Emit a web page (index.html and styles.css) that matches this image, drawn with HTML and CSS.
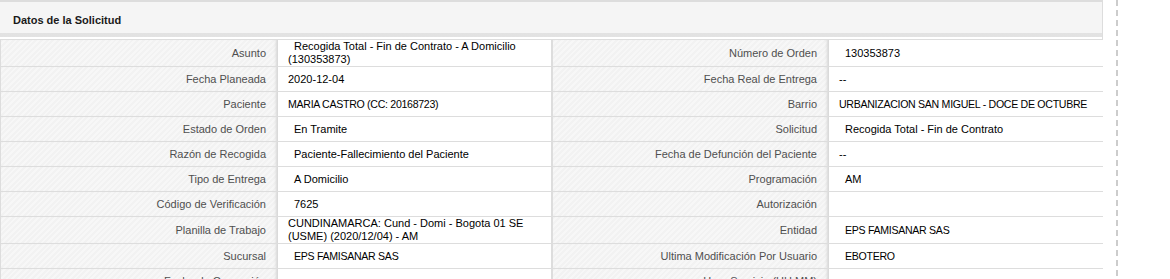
FILE: index.html
```html
<!DOCTYPE html>
<html lang="es">
<head>
<meta charset="utf-8">
<title>Datos de la Solicitud</title>
<link rel="stylesheet" href="styles.css">
</head>
<body>
<div class="page">
  <section class="panel">
    <header class="panel-heading">Datos de la Solicitud</header>
    <div class="gap"></div>
    <div class="grid">
      <div class="lbl">Asunto</div>
      <div class="val indent">Recogida Total - Fin de Contrato - A Domicilio (130353873)</div>
      <div class="lbl lbl2">Número de Orden</div>
      <div class="val val2 indent">130353873</div>

      <div class="lbl">Fecha Planeada</div>
      <div class="val">2020-12-04</div>
      <div class="lbl lbl2">Fecha Real de Entrega</div>
      <div class="val val2">--</div>

      <div class="lbl">Paciente</div>
      <div class="val caps">MARIA CASTRO (CC: 20168723)</div>
      <div class="lbl lbl2">Barrio</div>
      <div class="val val2 caps">URBANIZACION SAN MIGUEL - DOCE DE OCTUBRE</div>

      <div class="lbl">Estado de Orden</div>
      <div class="val indent">En Tramite</div>
      <div class="lbl lbl2">Solicitud</div>
      <div class="val val2 indent">Recogida Total - Fin de Contrato</div>

      <div class="lbl">Razón de Recogida</div>
      <div class="val indent">Paciente-Fallecimiento del Paciente</div>
      <div class="lbl lbl2">Fecha de Defunción del Paciente</div>
      <div class="val val2">--</div>

      <div class="lbl">Tipo de Entrega</div>
      <div class="val indent">A Domicilio</div>
      <div class="lbl lbl2">Programación</div>
      <div class="val val2 indent">AM</div>

      <div class="lbl">Código de Verificación</div>
      <div class="val indent">7625</div>
      <div class="lbl lbl2">Autorización</div>
      <div class="val val2"></div>

      <div class="lbl">Planilla de Trabajo</div>
      <div class="val">CUNDINAMARCA: Cund - Domi - Bogota 01 SE (USME) (2020/12/04) - AM</div>
      <div class="lbl lbl2">Entidad</div>
      <div class="val val2 indent caps">EPS FAMISANAR SAS</div>

      <div class="lbl">Sucursal</div>
      <div class="val indent caps">EPS FAMISANAR SAS</div>
      <div class="lbl lbl2">Ultima Modificación Por Usuario</div>
      <div class="val val2 indent caps">EBOTERO</div>

      <div class="lbl">Fecha de Corrección</div>
      <div class="val"></div>
      <div class="lbl lbl2">Hora Servicio (HH:MM)</div>
      <div class="val val2"></div>
    </div>
  </section>
  <div class="divider"></div>
</div>
</body>
</html>
```

FILE: styles.css
```css
html, body {
  margin: 0;
  padding: 0;
  background: #ffffff;
  overflow: hidden;
}

body {
  font-family: "Liberation Sans", Arial, sans-serif;
  font-size: 11px;
  color: #111;
}

.page {
  display: flex;
  align-items: stretch;
  height: 279px;
}

.panel {
  width: 1102px;
  flex: none;
  border-top: 2px solid #dddddd;
  border-right: 1px solid #dddddd;
  margin-right: 13px;
}

.panel-heading {
  height: 26px;
  padding: 5px 0 0 13px;
  display: flex;
  align-items: center;
  font-weight: bold;
  font-size: 11px;
  color: #1a1a1a;
  background: #f5f5f5;
  border-bottom: 4px solid #e6e6e6;
  border-image: linear-gradient(#f0f0f0, #e2e2e2) 1;
}

.gap {
  height: 2px;
  background: #ffffff;
}

.grid {
  display: grid;
  grid-template-columns: 277px 275px 276px 274px;
  border-top: 1px solid #dddddd;
  border-left: 1px solid #dddddd;
}

.lbl,
.val {
  min-height: 24px;
  border-bottom: 1px solid #dddddd;
  display: flex;
  align-items: center;
  line-height: 13px;
}

.lbl {
  justify-content: flex-end;
  text-align: right;
  padding-right: 12px;
  color: #4f4f4f;
  background-color: #f4f4f4;
  background-image: repeating-linear-gradient(135deg, #f2f2f2 0 2px, #f7f7f7 2px 4px);
  box-shadow: inset -4px 0 3px -2px #d6d6d6;
}

.val {
  padding: 0 2px 0 10px;
  font-size: 11px;
  background: #ffffff;
  color: #000000;
  border-right: 2px solid #dddddd;
}

.val2 {
  border-right: none;
}

.val.indent {
  text-indent: 6px;
}

.val.caps {
  font-size: 10.6px;
  letter-spacing: -0.3px;
}

.divider {
  width: 2px;
  flex: none;
  background: repeating-linear-gradient(180deg, #cccccc 0 6px, transparent 6px 10px);
}
```
